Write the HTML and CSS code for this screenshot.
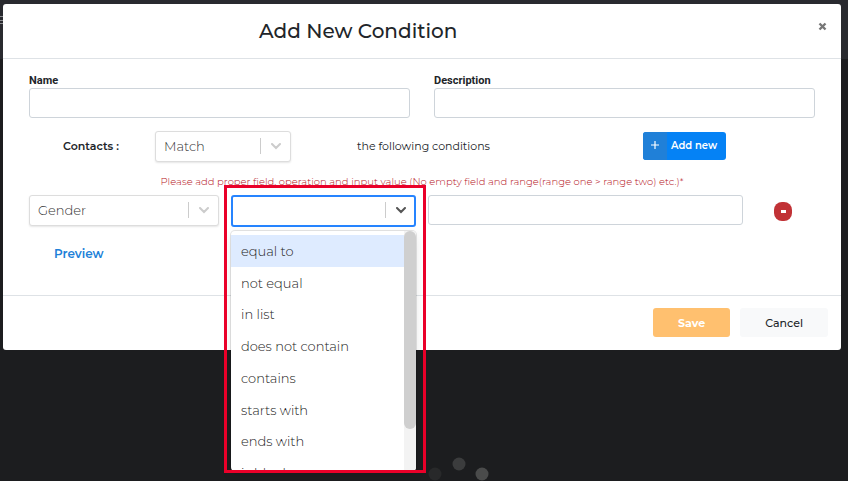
FILE: index.html
```
<!DOCTYPE html>
<html lang="en">
<head>
    <meta charset="UTF-8">
    <meta name="viewport" content="width=device-width, initial-scale=1.0">
    <title>Add New Condition</title>
    <link rel="stylesheet" href="styles.css">
</head>
<body>
    <div class="topbar">
        <span class="topbar__toggle"></span>
    </div>
    <svg class="loader" width="66" height="27" viewBox="0 0 66 27">
        <circle cx="9" cy="18" r="6.5" fill="#28292a"/>
        <circle cx="33" cy="8" r="6.5" fill="#3b3c3d"/>
        <circle cx="56" cy="18" r="6.5" fill="#4a4b4b"/>
    </svg>

    <form class="modal" role="dialog" aria-labelledby="modalTitle">
        <header class="modal__header">
            <h1 class="modal__title" id="modalTitle">Add New Condition</h1>
            <button class="modal__close" type="button" aria-label="Close">
                <svg width="9" height="9" viewBox="0 0 9 9">
                    <path d="M1.5 1.5l6 6M7.5 1.5l-6 6" stroke="#777" stroke-width="2.4"/>
                </svg>
            </button>
        </header>

        <div class="modal__body">
            <div class="details">
                <div>
                    <label class="details__label" for="name">Name</label>
                    <input class="input" type="text" id="name" name="name">
                </div>
                <div>
                    <label class="details__label" for="description">Description</label>
                    <input class="input" type="text" id="description" name="description">
                </div>
            </div>

            <div class="match">
                <label class="match__label" for="match">Contacts :</label>
                <div class="select">
                    <select class="select__control" id="match" name="match">
                        <option>Match</option>
                    </select>
                    <span class="select__arrow">
                        <svg width="10" height="7" viewBox="0 0 10 7"><path d="M1 1l4 4 4-4"/></svg>
                    </span>
                </div>
                <span class="match__text">the following conditions</span>
                <div>
                    <button class="add" type="button">
                        <span class="add__icon">
                            <svg width="8" height="8" viewBox="0 0 8 8"><path d="M4 0v8M0 4h8" stroke="#fff" stroke-width="1.2"/></svg>
                        </span>
                        <span class="add__text">Add new</span>
                    </button>
                </div>
            </div>

            <p class="error">Please add proper field, operation and input value (No empty field and range(range one &gt; range two) etc.)*</p>

            <div class="condition">
                <div class="select">
                    <select class="select__control" name="field" aria-label="Field">
                        <option>Gender</option>
                    </select>
                    <span class="select__arrow">
                        <svg width="10" height="7" viewBox="0 0 10 7"><path d="M1 1l4 4 4-4"/></svg>
                    </span>
                </div>
                <div class="select select--open">
                    <select class="select__control" name="operation" aria-label="Operation">
                        <option></option>
                    </select>
                    <span class="select__arrow">
                        <svg width="10" height="7" viewBox="0 0 10 7"><path d="M1 1l4 4 4-4"/></svg>
                    </span>
                    <div class="menu">
                        <ul class="menu__list" role="listbox" aria-label="Operation">
                            <li class="menu__option menu__option--focused" role="option">equal to</li>
                            <li class="menu__option" role="option">not equal</li>
                            <li class="menu__option" role="option">in list</li>
                            <li class="menu__option" role="option">does not contain</li>
                            <li class="menu__option" role="option">contains</li>
                            <li class="menu__option" role="option">starts with</li>
                            <li class="menu__option" role="option">ends with</li>
                            <li class="menu__option" role="option">is blank</li>
                        </ul>
                        <div class="menu__track">
                            <div class="menu__thumb"></div>
                        </div>
                    </div>
                    <div class="highlight"></div>
                </div>
                <input class="input" type="text" name="value" aria-label="Value">
                <button class="remove" type="button" aria-label="Remove condition">
                    <span class="remove__bar"></span>
                </button>
            </div>

            <a class="preview" href="#preview">Preview</a>
        </div>

        <footer class="modal__footer">
            <button class="button button--save" type="submit">Save</button>
            <button class="button button--cancel" type="button">Cancel</button>
        </footer>
    </form>
</body>
</html>
```
FILE: styles.css
```
* {
    margin: 0;
    padding: 0;
    box-sizing: border-box;
}

body {
    min-height: 100vh;
    padding: 4px 7px 0 3px;
    background-color: #1c1d1f;
    color: #212529;
    font-family: Montserrat, Inter, "Open Sans", sans-serif;
    font-size: 11px;
    position: relative;
    overflow: hidden;
}

button, input, select {
    font: inherit;
    color: inherit;
}

button {
    border: 0;
    cursor: pointer;
}

.topbar {
    position: absolute;
    top: 0;
    left: 0;
    width: 100%;
    height: 59px;
    padding-top: 16px;
    background-color: #292a2f;
}

.topbar__toggle {
    display: block;
    width: 14px;
    height: 8px;
    border: solid #8b8c8f;
    border-width: 1px 0;
    background: linear-gradient(#8b8c8f, #8b8c8f) center / 100% 1px no-repeat;
}

.loader {
    position: absolute;
    bottom: -2px;
    left: calc(50% + 2px);
}

.modal {
    position: relative;
    background-color: #fff;
    border-radius: 3px;
}

.modal__header {
    display: flex;
    align-items: center;
    height: 55px;
    padding: 0 14px 0 256px;
    border-bottom: 1px solid #dee2e6;
}

.modal__title {
    flex: 1;
    font-size: 20px;
    font-weight: 500;
    line-height: 24px;
}

.modal__close {
    display: flex;
    align-self: flex-start;
    padding: 18px 0 8px;
    background: none;
}

.modal__body {
    padding: 15px 26px 33px;
}

.details {
    display: grid;
    grid-template-columns: 1fr 1fr;
    gap: 24px;
}

.details__label {
    display: block;
    font-family: Roboto, sans-serif;
    font-weight: 700;
    line-height: 14px;
}

.input {
    display: block;
    width: 100%;
    height: 30px;
    padding: 0 8px;
    border: 1px solid #ced4da;
    border-radius: 3px;
    background-color: #fff;
}

.match {
    display: grid;
    grid-template-columns: 126fr 136fr 352fr 172fr;
    align-items: center;
    margin-top: 13px;
}

.match__label {
    padding: 0 0 2px 34px;
    font-weight: 600;
}

.match__text {
    padding: 0 0 2px 66px;
}

.select {
    position: relative;
}

.select__control {
    display: block;
    width: 100%;
    height: 31px;
    padding: 0 38px 2px 8px;
    border: 1px solid #ddd;
    border-radius: 3px;
    background-color: #fff;
    box-shadow: 0 1px 2px rgba(0, 0, 0, 0.1);
    color: #333;
    font-size: 13px;
    font-weight: 300;
    appearance: none;
}

.select__arrow {
    position: absolute;
    top: 7px;
    right: 0;
    display: flex;
    align-items: center;
    justify-content: center;
    width: 31px;
    height: 16px;
    border-left: 1px solid #ccc;
    pointer-events: none;
}

.select__arrow path {
    fill: none;
    stroke: #ccc;
    stroke-width: 2;
    stroke-linecap: round;
}

.select--open .select__control {
    height: 32px;
    border: 2px solid #2684ff;
    box-shadow: none;
}

.select--open .select__arrow path {
    stroke: #555;
}

.menu {
    position: absolute;
    top: 36px;
    left: 0;
    z-index: 1;
    width: 100%;
    height: 240px;
    overflow: hidden;
    background-color: #fff;
    border-radius: 4px;
    box-shadow: 0 0 0 1px rgba(0, 0, 0, 0.1), 0 4px 11px rgba(0, 0, 0, 0.1);
}

.menu__list {
    display: flex;
    flex-direction: column;
    height: 258px;
    padding-top: 4px;
    list-style: none;
}

.menu__option {
    display: flex;
    flex: 1;
    align-items: center;
    padding: 0 10px;
    color: #222;
    font-size: 13px;
    font-weight: 300;
    line-height: 16px;
}

.menu__option--focused {
    background-color: #deebff;
}

.menu__track {
    position: absolute;
    top: 0;
    right: 0;
    width: 12px;
    height: 100%;
    background-color: #f3f3f3;
}

.menu__thumb {
    height: 198px;
    border-radius: 6px;
    background-color: #cfcfcf;
}

.highlight {
    position: absolute;
    top: -10px;
    left: -7px;
    right: -10px;
    z-index: 2;
    height: 288px;
    border: 3px solid #ea0029;
    pointer-events: none;
}

.add {
    display: flex;
    height: 28px;
    margin-bottom: 1px;
    overflow: hidden;
    border-radius: 3px;
    background-color: #0582f5;
    color: #fff;
    font-size: 10px;
    font-weight: 600;
    line-height: 28px;
}

.add__icon {
    width: 24px;
    background-color: #2080d8;
}

.add__text {
    padding: 0 9px 0 4px;
}

.error {
    margin: 12px 0 6px;
    color: #b5121b;
    font-size: 10px;
    font-weight: 300;
    line-height: 15px;
    text-align: center;
}

.condition {
    display: grid;
    grid-template-columns: 190fr 185fr 315fr 60fr;
    column-gap: 12px;
}

.remove {
    display: flex;
    align-items: center;
    justify-content: center;
    align-self: center;
    width: 18px;
    height: 19px;
    margin-left: 19px;
    border-radius: 8px;
    background-color: #c13236;
}

.remove__bar {
    width: 5px;
    height: 3px;
    background-color: #fff;
}

.preview {
    display: inline-block;
    margin: 19px 0 0 25px;
    color: #2080d8;
    font-size: 12px;
    font-weight: 600;
    line-height: 16px;
    text-decoration: none;
}

.modal__footer {
    display: flex;
    justify-content: flex-end;
    gap: 10px;
    padding: 12px 13px 13px;
    border-top: 1px solid #dee2e6;
}

.button {
    height: 29px;
    padding: 0 25px;
    border-radius: 3px;
    font-weight: 500;
}

.button--save {
    background-color: #ffc06f;
    color: #fff;
    font-weight: 700;
}

.button--cancel {
    background-color: #f8f9fa;
}
```
